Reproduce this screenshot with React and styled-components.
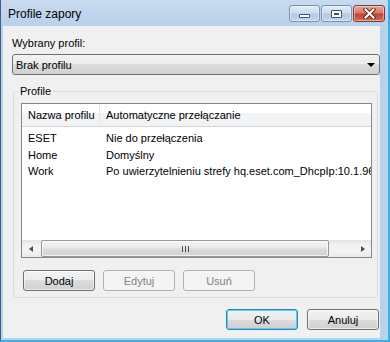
import React from 'react';
import styled, { createGlobalStyle } from 'styled-components';

const GlobalStyle = createGlobalStyle`
  html, body {
    margin: 0;
    padding: 0;
    background: #fff;
  }
  body {
    font-family: 'Liberation Sans', Arial, sans-serif;
    font-size: 11px;
    color: #000;
  }
  * {
    box-sizing: border-box;
  }
`;

const Window = styled.div`
  width: 390px;
  height: 342px;
  display: flex;
  flex-direction: column;
  background: #b9d1ea;
  border-left: 1px solid #3d5d86;
  border-right: 2px solid #34b4e4;
  border-bottom: 2px solid #34b4e4;
  padding: 0 8px 2px 2px;
`;

const TitleBar = styled.div`
  height: 26px;
  display: flex;
  align-items: flex-start;
  justify-content: space-between;
  margin: 0 -8px 0 -2px;
  padding: 5px 3px 0 7px;
  background: linear-gradient(to bottom, #c8daef 0%, #b9d0ea 100%);
`;

const Title = styled.div`
  font-size: 12px;
  line-height: 18px;
  color: #000;
`;

const Caption = styled.div`
  display: flex;
  gap: 1px;
`;

const CapButton = styled.div`
  width: ${({ $close }) => ($close ? '32px' : '31px')};
  height: 17px;
  border: 1px solid ${({ $close }) => ($close ? '#7a3a30' : '#7791b3')};
  border-radius: 3px;
  display: flex;
  align-items: center;
  justify-content: center;
  background: ${({ $close }) =>
    $close
      ? 'linear-gradient(to bottom, #e8a595 0%, #d8796a 45%, #c5452f 55%, #d06a4f 100%)'
      : 'linear-gradient(to bottom, #e3ecf7 0%, #ccdbee 45%, #b5c9e2 55%, #c6d7ec 100%)'};
  box-shadow: inset 0 0 0 1px rgba(255, 255, 255, 0.45);
`;

const MinGlyph = styled.div`
  width: 11px;
  height: 4px;
  margin-top: 5px;
  border: 1px solid #40506a;
  border-radius: 1px;
  background: #fff;
`;

const MaxGlyph = styled.div`
  width: 11px;
  height: 8px;
  border: 1px solid #40506a;
  border-radius: 1px;
  background: #fff;
  box-shadow: inset 0 0 0 2px #fff, inset 0 0 0 3px #40506a;
`;

const Client = styled.div`
  flex: 1;
  display: flex;
  flex-direction: column;
  background: #f0f0f0;
  padding: 10px 0 8px 9px;
`;

const Label = styled.div`
  line-height: 14px;
  height: 14px;
`;

const Combo = styled.div`
  margin-top: 4px;
  height: 21px;
  border: 1px solid #707070;
  border-radius: 3px;
  display: flex;
  align-items: center;
  justify-content: space-between;
  padding: 0 4px 0 3px;
  background: linear-gradient(to bottom, #f2f2f2 0%, #ebebeb 50%, #dddddd 50%, #cfcfcf 100%);
`;

const Arrow = styled.div`
  width: 0;
  height: 0;
  border-left: 4px solid transparent;
  border-right: 4px solid transparent;
  border-top: 4px solid #000;
`;

const Group = styled.fieldset`
  margin: 9px 2px 0 1px;
  padding: 0 5px 6px 7px;
  border: 1px solid #d5dfe5;
  border-radius: 3px;
  min-width: 0;
`;

const Legend = styled.legend`
  margin-left: -3px;
  padding: 0 2px;
  line-height: 14px;
  height: 14px;
`;

const ListView = styled.div`
  margin-top: 5px;
  height: 155px;
  border: 1px solid #828790;
  background: #fff;
  display: flex;
  flex-direction: column;
  overflow: hidden;
`;

const Header = styled.div`
  display: grid;
  grid-template-columns: 78px 420px;
  height: 23px;
  background: linear-gradient(to bottom, #ffffff 0%, #ffffff 40%, #f3f4f6 41%, #f1f2f4 100%);
  border-bottom: 1px solid #d5d5d5;
`;

const HeadCell = styled.div`
  display: flex;
  align-items: center;
  padding-left: 6px;
  white-space: nowrap;
  border-right: 1px solid #e3e8ee;
`;

const Rows = styled.div`
  flex: 1;
  padding-top: 3px;
`;

const Row = styled.div`
  display: grid;
  grid-template-columns: 78px 420px;
  height: 16.5px;
  line-height: 16px;
`;

const Cell = styled.div`
  padding-left: 6px;
  white-space: nowrap;
  overflow: hidden;
`;

const HScroll = styled.div`
  height: 17px;
  display: flex;
  align-items: stretch;
  background: linear-gradient(to bottom, #e4e4e4 0%, #f2f2f2 30%, #f2f2f2 70%, #e8e8e8 100%);
`;

const ScrollArrow = styled.div`
  width: 17px;
  display: flex;
  align-items: center;
  justify-content: center;
`;

const ArrowGlyph = styled.div`
  width: 0;
  height: 0;
  border-top: 3.5px solid transparent;
  border-bottom: 3.5px solid transparent;
  ${({ $dir }) => ($dir === 'left' ? 'border-right: 4px solid #4d4d4d;' : 'border-left: 4px solid #4d4d4d;')}
`;

const Track = styled.div`
  flex: 1;
  display: flex;
  padding: 0 25px 0 2px;
`;

const Thumb = styled.div`
  flex: 1;
  margin: 0;
  border: 1px solid #979797;
  border-radius: 2px;
  display: flex;
  align-items: center;
  justify-content: center;
  background: linear-gradient(to bottom, #f4f4f4 0%, #e9e9e9 45%, #dadada 55%, #d2d2d2 100%);
  box-shadow: inset 0 0 0 1px rgba(255, 255, 255, 0.7);
`;

const Grip = styled.div`
  width: 7px;
  height: 6px;
  background: repeating-linear-gradient(to right, #4d4d4d 0, #4d4d4d 1px, transparent 1px, transparent 3px);
`;

const ButtonRow = styled.div`
  display: flex;
  gap: 8px;
  margin: 12px 0 0 2px;
  justify-content: ${({ $end }) => ($end ? 'flex-end' : 'flex-start')};
`;

const Button = styled.div`
  width: 72px;
  height: 21px;
  display: flex;
  align-items: center;
  justify-content: center;
  border: 1px solid ${({ $disabled, $default }) => ($disabled ? '#adb2b5' : $default ? '#3c7fb1' : '#707070')};
  border-radius: 3px;
  color: ${({ $disabled }) => ($disabled ? '#838383' : '#000')};
  background: ${({ $disabled }) =>
    $disabled
      ? '#f4f4f4'
      : 'linear-gradient(to bottom, #f2f2f2 0%, #ebebeb 50%, #dddddd 50%, #cfcfcf 100%)'};
  box-shadow: ${({ $default, $disabled }) =>
    $default
      ? 'inset 0 0 0 1px #48d3fc'
      : $disabled
      ? 'none'
      : 'inset 0 0 0 1px rgba(255, 255, 255, 0.6)'};
`;

const Footer = styled(ButtonRow)`
  margin: 11px 1px 0 0;
  gap: 9px;
`;

const CloseIcon = () => (
  <svg width="13" height="11" viewBox="0 0 13 11">
    <path d="M2.5 1.5 L10.5 9.5 M10.5 1.5 L2.5 9.5" stroke="#5a2a22" strokeWidth="4" strokeLinecap="square" />
    <path d="M2.5 1.5 L10.5 9.5 M10.5 1.5 L2.5 9.5" stroke="#fff" strokeWidth="2" strokeLinecap="square" />
  </svg>
);

const profiles = [
  { name: 'ESET', rule: 'Nie do przełączenia' },
  { name: 'Home', rule: 'Domyślny' },
  { name: 'Work', rule: 'Po uwierzytelnieniu strefy hq.eset.com_DhcpIp:10.1.96.1' },
];

const App = () => (
  <>
    <GlobalStyle />
    <Window>
      <TitleBar>
        <Title>Profile zapory</Title>
        <Caption>
          <CapButton>
            <MinGlyph />
          </CapButton>
          <CapButton>
            <MaxGlyph />
          </CapButton>
          <CapButton $close>
            <CloseIcon />
          </CapButton>
        </Caption>
      </TitleBar>
      <Client>
        <Label>Wybrany profil:</Label>
        <Combo>
          <span>Brak profilu</span>
          <Arrow />
        </Combo>
        <Group>
          <Legend>Profile</Legend>
          <ListView>
            <Header>
              <HeadCell>Nazwa profilu</HeadCell>
              <HeadCell>Automatyczne przełączanie</HeadCell>
            </Header>
            <Rows>
              {profiles.map((p) => (
                <Row key={p.name}>
                  <Cell>{p.name}</Cell>
                  <Cell>{p.rule}</Cell>
                </Row>
              ))}
            </Rows>
            <HScroll>
              <ScrollArrow>
                <ArrowGlyph $dir="left" />
              </ScrollArrow>
              <Track>
                <Thumb>
                  <Grip />
                </Thumb>
              </Track>
              <ScrollArrow>
                <ArrowGlyph $dir="right" />
              </ScrollArrow>
            </HScroll>
          </ListView>
          <ButtonRow>
            <Button>Dodaj</Button>
            <Button $disabled>Edytuj</Button>
            <Button $disabled>Usuń</Button>
          </ButtonRow>
        </Group>
        <Footer $end>
          <Button $default>OK</Button>
          <Button>Anuluj</Button>
        </Footer>
      </Client>
    </Window>
  </>
);

export default App;
